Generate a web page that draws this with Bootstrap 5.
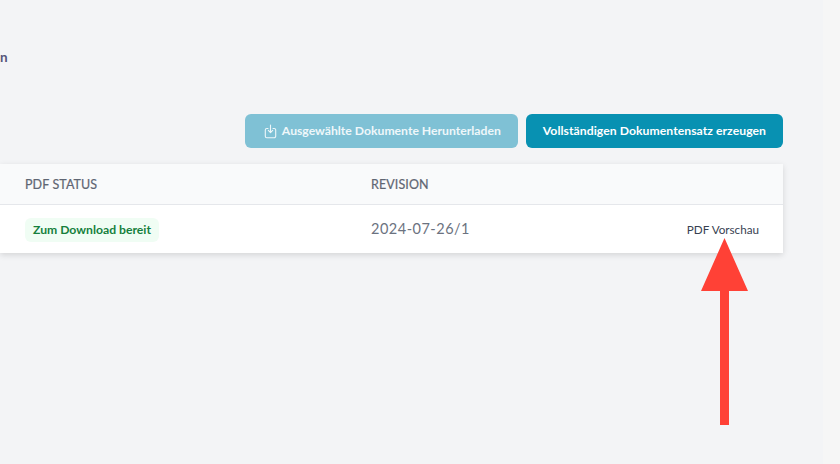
<!DOCTYPE html>
<html lang="de">
<head>
<meta charset="utf-8">
<title>Dokumente</title>
<link href="https://cdn.jsdelivr.net/npm/bootstrap@5.3.0/dist/css/bootstrap.min.css" rel="stylesheet">
<style>
html,body{height:100%;overflow:hidden}
body{background:#f6f6f6;font-family:Lato,"Noto Sans",sans-serif}
.shell{width:823px;height:464px;background:#f3f4f6;position:relative;padding:49px 40px 0 0}
.crumb{font-size:13.5px;line-height:17px;font-weight:700;color:#55557a;height:65px}
.act{height:34px;font-size:12.2px;font-weight:700;border:0;border-radius:6px;color:#fff;padding:0 17px;display:inline-flex;align-items:center;gap:5px;line-height:1}
.act-pale{background:#7fc1d5;color:#eef7fa;padding:0 17px 0 19px}
.act-full{background:#0891b2;letter-spacing:.05px}
.act-full:hover,.act-pale:hover{color:#fff}
.tbl-box{margin-top:16px;background:#fff;box-shadow:0 2px 6px rgba(0,0,0,.13)}
.tbl-head{height:41px;background:#f9fafb;border-bottom:1px solid #e5e7eb;font-size:12.5px;font-weight:400;color:#5f6673;letter-spacing:.1px;padding-top:2px;-webkit-text-stroke:.2px #5f6673}
.tbl-row{height:48px;font-size:14.5px;color:#6b7280}
.c1{width:371px;padding-left:25px}
.c2{flex:1}
.tbl-row .c2{letter-spacing:.5px}
.stat{display:inline-block;background:#f0fdf4;color:#15803d;font-size:12.2px;font-weight:700;line-height:16px;padding:4px 8px 4px;border-radius:6px;margin-top:1px}
.prev{font-size:11.7px;color:#374151;padding-right:24px;padding-top:1px}
.arrow{position:absolute;left:701px;top:238px;width:47px;height:188px}
</style>
</head>
<body>
<div class="shell">
  <div class="crumb">n</div>
  <div class="d-flex justify-content-end gap-2">
    <button class="btn act act-pale" type="button">
      <svg width="13" height="15" viewBox="0 0 13 15" fill="none" stroke="currentColor" stroke-width="1.1" stroke-linecap="round" stroke-linejoin="round"><path d="M4 4.500H2.800A1.500 1.500 0 0 0 1.300 6v6.200a1.500 1.500 0 0 0 1.500 1.500h7.400a1.500 1.500 0 0 0 1.500-1.500V6a1.500 1.500 0 0 0-1.500-1.500H9"/><path d="M6.500 1v7.500M4.300 6.400l2.200 2.200 2.200-2.200"/></svg>
      Ausgewählte Dokumente Herunterladen
    </button>
    <button class="btn act act-full" type="button">Vollständigen Dokumentensatz erzeugen</button>
  </div>
  <div class="tbl-box">
    <div class="tbl-head d-flex align-items-center">
      <div class="c1">PDF STATUS</div>
      <div class="c2">REVISION</div>
    </div>
    <div class="tbl-row d-flex align-items-center">
      <div class="c1"><span class="stat">Zum Download bereit</span></div>
      <div class="c2">2024-07-26/1</div>
      <div class="prev">PDF Vorschau</div>
    </div>
  </div>
  <svg class="arrow" viewBox="0 0 47 188"><path fill="#ff4136" d="M23.500 0 47 53H28v134H19V53H0z"/></svg>
</div>
</body>
</html>
